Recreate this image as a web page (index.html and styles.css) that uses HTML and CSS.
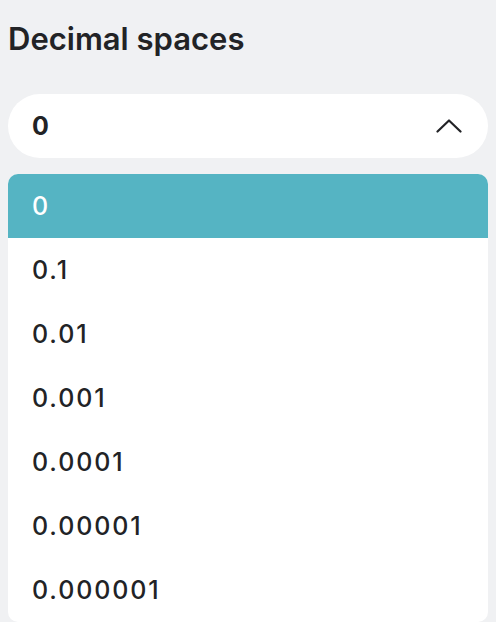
FILE: index.html
```html
<!DOCTYPE html>
<html lang="en">
<head>
<meta charset="utf-8">
<title>Decimal spaces</title>
<link rel="stylesheet" href="styles.css">
</head>
<body>
<div class="panel">
  <h1 class="title">Decimal spaces</h1>
  <div class="select">
    <span class="select-value">0</span>
    <svg class="chevron" width="26" height="14" viewBox="0 0 26 14" aria-hidden="true">
      <polyline points="1.5,12.5 13,1.5 24.5,12.5" fill="none" stroke="#222326" stroke-width="2.2" stroke-linecap="round" stroke-linejoin="round"/>
    </svg>
  </div>
  <ul class="options">
    <li class="option selected">0</li>
    <li class="option">0.1</li>
    <li class="option">0.01</li>
    <li class="option">0.001</li>
    <li class="option">0.0001</li>
    <li class="option">0.00001</li>
    <li class="option">0.000001</li>
  </ul>
</div>
</body>
</html>
```
FILE: styles.css
```css
html, body {
  margin: 0;
  padding: 0;
  background: #f0f1f3;
  height: 100%;
  overflow: hidden;
}
body {
  font-family: Inter, "Noto Sans", sans-serif;
  color: #222326;
}
.panel {
  padding: 21px 8px 0 8px;
}
.title {
  margin: 0;
  font-size: 31px;
  line-height: 36px;
  font-weight: 600;
  letter-spacing: 0;
}
.select {
  margin-top: 37px;
  height: 64px;
  background: #ffffff;
  border-radius: 32px;
  display: flex;
  align-items: center;
  justify-content: space-between;
  padding: 0 26px 0 24px;
}
.select-value {
  font-size: 25px;
  font-weight: 700;
  letter-spacing: 2px;
}
.chevron {
  display: block;
}
.options {
  list-style: none;
  margin: 16px 0 0 0;
  padding: 0;
  background: #ffffff;
  border-radius: 10px;
  overflow: hidden;
}
.option {
  height: 64px;
  display: flex;
  align-items: center;
  padding-left: 24px;
  font-size: 25px;
  font-weight: 500;
  letter-spacing: 1.9px;
}
.option.selected {
  background: #55b4c3;
  color: #ffffff;
  font-weight: 500;
}
```
